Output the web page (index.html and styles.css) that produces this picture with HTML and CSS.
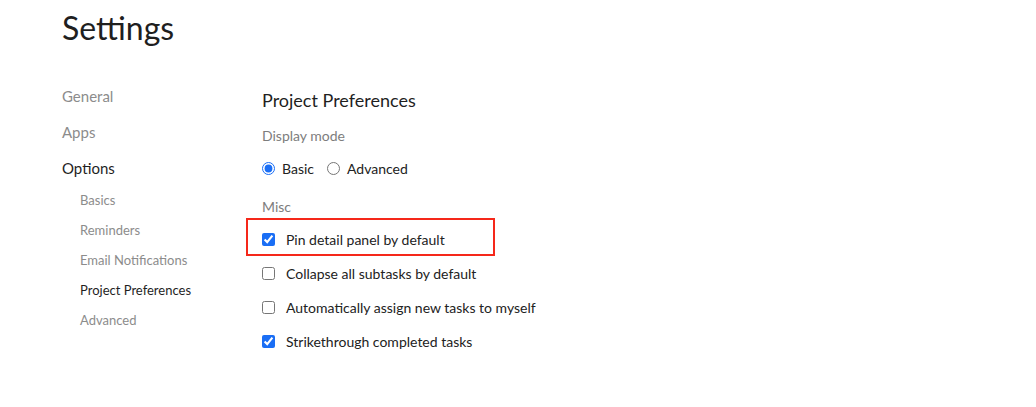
FILE: index.html
```html
<!DOCTYPE html>
<html>
<head>
<meta charset="utf-8">
<link rel="stylesheet" href="styles.css">
</head>
<body>
<div class="page">
  <h1 class="title">Settings</h1>
  <div class="layout">
    <nav class="sidebar">
      <div class="nav-item">General</div>
      <div class="nav-item">Apps</div>
      <div class="nav-item active">Options</div>
      <div class="sub-list">
        <div class="sub-item">Basics</div>
        <div class="sub-item">Reminders</div>
        <div class="sub-item">Email Notifications</div>
        <div class="sub-item active">Project Preferences</div>
        <div class="sub-item">Advanced</div>
      </div>
    </nav>
    <main class="content">
      <h2 class="section-title">Project Preferences</h2>
      <div class="label label-first">Display mode</div>
      <div class="radio-row">
        <label class="radio"><input type="radio" name="mode" checked><span>Basic</span></label>
        <label class="radio"><input type="radio" name="mode"><span>Advanced</span></label>
      </div>
      <div class="label label-misc">Misc</div>
      <div class="check-list">
        <label class="check highlight"><input type="checkbox" checked><span>Pin detail panel by default</span></label>
        <label class="check"><input type="checkbox"><span>Collapse all subtasks by default</span></label>
        <label class="check"><input type="checkbox"><span>Automatically assign new tasks to myself</span></label>
        <label class="check"><input type="checkbox" checked><span>Strikethrough completed tasks</span></label>
      </div>
    </main>
  </div>
</div>
</body>
</html>
```

FILE: styles.css
```css
*, *::before, *::after { box-sizing: border-box; }
html, body { margin: 0; padding: 0; background: #fff; }
body {
  font-family: Lato, "Open Sans", sans-serif;
  color: #222;
}
.page {
  padding: 8px 0 0 62px;
}
.title {
  margin: 0;
  font-size: 32px;
  line-height: 40px;
  font-weight: 400;
  color: #1f1f1f;
}
.layout {
  display: flex;
}
.sidebar {
  width: 200px;
  padding-top: 30px;
  display: flex;
  flex-direction: column;
}
.nav-item {
  font-size: 15px;
  line-height: 36px;
  color: #8c8c8c;
}
.nav-item.active { color: #1f1f1f; }
.sub-list {
  margin-top: -1px;
  padding-left: 18px;
  display: flex;
  flex-direction: column;
}
.sub-item {
  font-size: 13px;
  line-height: 30px;
  color: #8c8c8c;
}
.sub-item.active { color: #1f1f1f; }
.content {
  padding-top: 37px;
  display: flex;
  flex-direction: column;
}
.section-title {
  margin: 0;
  font-size: 18px;
  line-height: 30px;
  font-weight: 400;
  color: #1f1f1f;
}
.label {
  font-size: 14px;
  line-height: 30px;
  color: #7d7d7d;
}
.label-first { margin-top: 6px; }
.label-misc { margin-top: 9px; }
.radio-row {
  margin-top: 2px;
  height: 30px;
  display: flex;
  align-items: center;
  gap: 13px;
}
.radio {
  display: flex;
  align-items: center;
  gap: 7px;
  font-size: 14px;
  color: #222;
}
.radio input {
  margin: 0;
  width: 13px;
  height: 13px;
  accent-color: #1a6ef5;
}
.check-list {
  margin-top: 0;
  display: flex;
  flex-direction: column;
}
.check {
  height: 34px;
  display: flex;
  align-items: center;
  gap: 11px;
  font-size: 14px;
  color: #222;
}
.check input {
  margin: 0;
  width: 13px;
  height: 13px;
  accent-color: #1a6ef5;
}
.highlight {
  position: relative;
}
.highlight::after {
  content: "";
  position: absolute;
  left: -16px;
  top: -4px;
  width: 249px;
  height: 38px;
  border: 2px solid #f5281a;
  pointer-events: none;
}
```
